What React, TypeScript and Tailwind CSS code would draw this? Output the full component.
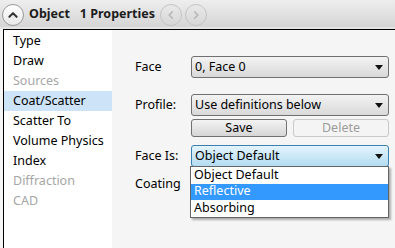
import clsx from 'clsx'

const FONT = { fontFamily: '"Noto Sans", "Open Sans", sans-serif' }

const items = [
  { label: 'Type' },
  { label: 'Draw' },
  { label: 'Sources', disabled: true },
  { label: 'Coat/Scatter', selected: true },
  { label: 'Scatter To' },
  { label: 'Volume Physics' },
  { label: 'Index' },
  { label: 'Diffraction', disabled: true },
  { label: 'CAD', disabled: true },
]

function Arrow() {
  return (
    <svg width="8" height="5" viewBox="0 0 8 5" className="shrink-0">
      <path d="M0 0h8L4 5z" fill="#111" />
    </svg>
  )
}

function Combo({ value, open }: { value: string; open?: boolean }) {
  return (
    <div
      className={clsx(
        'flex h-[22px] items-center rounded-[3px] border pl-[3px] pr-[5px] text-[12.5px] text-black',
        open
          ? 'border-[#3c7fb1] bg-linear-to-b from-[#e3f4fc] to-[#b4dcf2]'
          : 'border-[#707070] bg-linear-to-b from-[#f3f3f3] to-[#d9d9d9]'
      )}
    >
      <span className="flex-1 whitespace-nowrap leading-[18px]">{value}</span>
      <Arrow />
    </div>
  )
}

function RoundButton({ dir, active }: { dir: 'up' | 'left' | 'right'; active?: boolean }) {
  const d = dir === 'up' ? 'M7 13l4-4 4 4' : dir === 'left' ? 'M12.5 7.5l-3.5 3.5 3.5 3.5' : 'M9.5 7.5l3.5 3.5-3.5 3.5'
  return (
    <div
      className={clsx(
        'flex h-[22px] w-[22px] items-center justify-center rounded-full border',
        active ? 'border-[#9a9a9a] bg-linear-to-b from-white to-[#e8e8e8]' : 'border-[#c4c4c4] bg-transparent'
      )}
    >
      <svg width="22" height="22" viewBox="0 0 22 22">
        <path
          d={d}
          fill="none"
          stroke={active ? '#333' : '#b4b4b4'}
          strokeWidth={active ? 2.2 : 1.6}
          strokeLinecap="round"
          strokeLinejoin="round"
        />
      </svg>
    </div>
  )
}

export default function App() {
  return (
    <div className="flex h-[248px] w-[395px] flex-col overflow-hidden bg-[#f5f5f5]" style={FONT}>
      {/* title bar */}
      <div className="flex h-[29px] items-center bg-linear-to-b from-[#eeeeee] to-[#d3d3d3] pl-[2px] shadow-[inset_0_-2px_0_#e4e4e4]">
        <RoundButton dir="up" active />
        <span className="ml-[5px] text-[12.5px] font-bold text-[#1c1c1c]">Object</span>
        <span className="ml-[10px] text-[12.5px] font-bold text-[#1c1c1c]">1 Properties</span>
        <div className="ml-[5px] flex gap-[3px]">
          <RoundButton dir="left" />
          <RoundButton dir="right" />
        </div>
      </div>

      <div className="ml-[3px] flex flex-1 border-l border-t border-black">
        {/* page list */}
        <div className="w-[108px] bg-white pt-[1px]">
          {items.map((it) => (
            <div
              key={it.label}
              className={clsx(
                'flex h-[20px] items-center pl-[9px] text-[12.5px]',
                it.selected && 'bg-[#cde3f7]',
                it.disabled ? 'text-[#a6a6a6]' : 'text-black'
              )}
            >
              {it.label}
            </div>
          ))}
        </div>

        {/* properties */}
        <div className="relative flex flex-1 flex-col pl-[23px] pr-[6px] pt-[26px] text-[12.5px] text-black">
          <div className="flex items-center">
            <span className="w-[56px]">Face</span>
            <div className="flex-1">
              <Combo value="0, Face 0" />
            </div>
          </div>

          <div className="mt-[16px] flex items-center">
            <span className="w-[56px]">Profile:</span>
            <div className="flex-1">
              <Combo value="Use definitions below" />
            </div>
          </div>

          <div className="ml-[56px] mt-[3px] flex gap-[6px]">
            <div className="flex h-[18px] flex-1 items-center justify-center rounded-[3px] border border-[#707070] bg-linear-to-b from-[#f3f3f3] to-[#d6d6d6]">
              Save
            </div>
            <div className="flex h-[18px] flex-1 items-center justify-center rounded-[3px] border border-[#c9c9c9] bg-[#f4f4f4] text-[#9c9c9c]">
              Delete
            </div>
          </div>

          <div className="relative mt-[8px] flex items-center">
            <span className="w-[56px]">Face Is:</span>
            <div className="relative flex-1">
              <Combo value="Object Default" open />
              <div className="absolute left-[-1px] right-0 top-[21px] z-10 border border-[#646464] bg-white shadow-[2px_2px_2px_rgba(0,0,0,0.3)]">
                <div className="flex h-[16.5px] items-center pl-[3px]">Object Default</div>
                <div className="flex h-[16.5px] items-center bg-[#3399ff] pl-[3px] text-white">Reflective</div>
                <div className="flex h-[16.5px] items-center pl-[3px]">Absorbing</div>
              </div>
            </div>
          </div>

          <div className="mt-[6px] flex items-center">
            <span className="w-[56px]">Coating</span>
            <div className="flex-1">
              <Combo value="" />
            </div>
          </div>
        </div>
      </div>
    </div>
  )
}
